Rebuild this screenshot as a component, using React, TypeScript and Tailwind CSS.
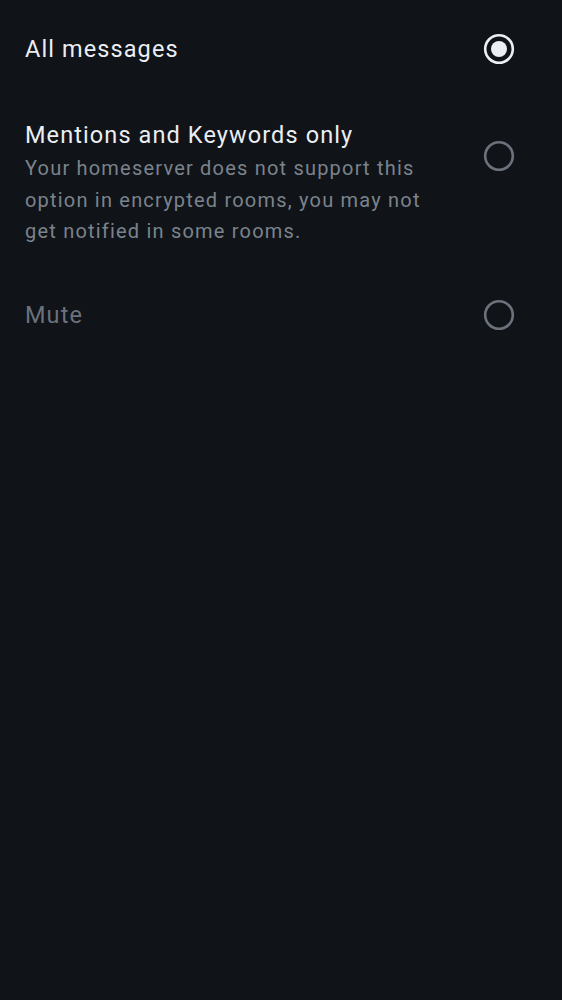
import { useState } from 'react'

// Notification settings - radio list of options
type Option = {
  id: string
  title: string
  description?: string
  disabled?: boolean
}

const options: Option[] = [
  { id: 'all', title: 'All messages' },
  {
    id: 'mentions',
    title: 'Mentions and Keywords only',
    description:
      'Your homeserver does not support this option in encrypted rooms, you may not get notified in some rooms.',
  },
  { id: 'mute', title: 'Mute', disabled: true },
]

function Radio({ checked }: { checked: boolean }) {
  return (
    <svg width="32" height="32" viewBox="0 0 32 32" className="shrink-0">
      <circle
        cx="16"
        cy="16"
        r="13.8"
        fill="none"
        stroke={checked ? '#ebeef2' : '#6b727b'}
        strokeWidth="2.6"
      />
      {checked && <circle cx="16" cy="16" r="8" fill="#ebeef2" />}
    </svg>
  )
}

export default function App() {
  const [selected, setSelected] = useState('all')

  return (
    <div className="min-h-screen bg-[#101318] font-['Roboto',sans-serif]">
      <div className="pl-[25px] pr-[47px]">
        {/* All messages */}
        <button
          onClick={() => setSelected('all')}
          className="flex h-[98px] w-full items-center justify-between text-left"
        >
          <span className="text-[23.5px] leading-[30px] tracking-[1.1px] text-[#ebeef2]">
            {options[0].title}
          </span>
          <Radio checked={selected === 'all'} />
        </button>

        {/* Mentions and keywords */}
        <button
          onClick={() => setSelected('mentions')}
          className="flex w-full items-start justify-between gap-6 pt-[22px] text-left"
        >
          <div className="max-w-[405px]">
            <div className="text-[23.5px] leading-[30px] tracking-[1.1px] text-[#ebeef2]">
              {options[1].title}
            </div>
            <div className="mt-[3px] text-[20px] leading-[31.5px] tracking-[1.2px] text-[#7b838c]">
              {options[1].description}
            </div>
          </div>
          <div className="mt-[20px]">
            <Radio checked={selected === 'mentions'} />
          </div>
        </button>

        {/* Mute */}
        <div className="mt-[22px] flex h-[90px] w-full items-center justify-between">
          <span className="text-[23.5px] leading-[30px] tracking-[1.1px] text-[#6b727b]">
            {options[2].title}
          </span>
          <Radio checked={false} />
        </div>
      </div>
    </div>
  )
}
